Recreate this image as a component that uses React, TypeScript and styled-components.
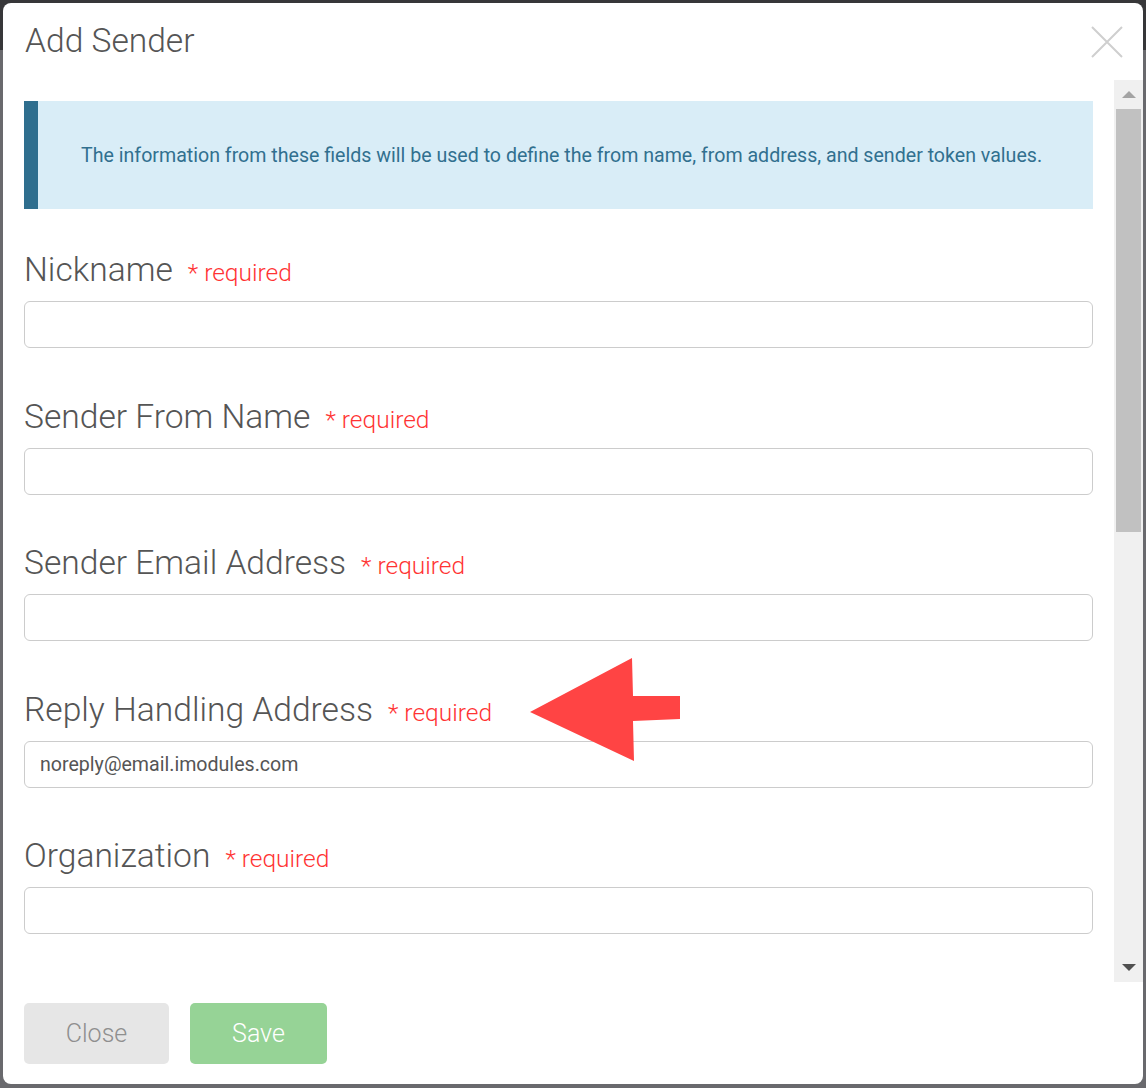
import React from 'react';
import styled, { createGlobalStyle } from 'styled-components';

const GlobalStyle = createGlobalStyle`
  html, body {
    margin: 0;
    padding: 0;
    background: #69696d;
  }
  body {
    font-family: Roboto, "Liberation Sans", sans-serif;
  }
`;

const fields = [
  { label: 'Nickname', value: '', arrow: false },
  { label: 'Sender From Name', value: '', arrow: false },
  { label: 'Sender Email Address', value: '', arrow: false },
  { label: 'Reply Handling Address', value: 'noreply@email.imodules.com', arrow: true },
  { label: 'Organization', value: '', arrow: false }
];

const App = () => {
  return (
    <>
      <GlobalStyle />
      <Backdrop>
        <Modal>
          <Header>
            <Title>Add Sender</Title>
            <CloseIcon aria-label="Close">
              <svg width="32" height="32" viewBox="0 0 32 32">
                <path d="M1 1 L31 31 M31 1 L1 31" stroke="#cfcfcf" strokeWidth="2" fill="none" />
              </svg>
            </CloseIcon>
          </Header>
          <Body>
            <Content>
              <Alert>
                The information from these fields will be used to define the from name, from address, and sender token values.
              </Alert>
              {fields.map((f) => (
                <Field key={f.label}>
                  <LabelRow>
                    <Label>{f.label}</Label>
                    <Required>* required</Required>
                    {f.arrow && (
                      <Pointer width="152" height="105" viewBox="0 0 152 105">
                        <polygon
                          points="0,54 102,0 103,38 150,38 150,61 103,63 104,103"
                          fill="#ff4444"
                        />
                      </Pointer>
                    )}
                  </LabelRow>
                  <Input type="text" defaultValue={f.value} />
                </Field>
              ))}
            </Content>
            <ScrollTrack>
              <ScrollButton>
                <svg width="14" height="8" viewBox="0 0 14 8">
                  <polygon points="0,7 14,7 7,0" fill="#a3a3a3" />
                </svg>
              </ScrollButton>
              <ScrollArea>
                <Thumb />
              </ScrollArea>
              <ScrollButton>
                <svg width="14" height="8" viewBox="0 0 14 8">
                  <polygon points="0,0 14,0 7,7" fill="#505050" />
                </svg>
              </ScrollButton>
            </ScrollTrack>
          </Body>
          <Footer>
            <Button $variant="close">Close</Button>
            <Button $variant="save">Save</Button>
          </Footer>
        </Modal>
      </Backdrop>
    </>
  );
};

const Backdrop = styled.div`
  width: 1146px;
  height: 1088px;
  box-sizing: border-box;
  padding: 3px;
  background: linear-gradient(#373739 0, #373739 50px, #69696d 50px);
  overflow: hidden;
`;

const Modal = styled.div`
  width: 1140px;
  height: 1081px;
  background: #fff;
  border-radius: 8px;
  display: flex;
  flex-direction: column;
  overflow: hidden;
`;

const Header = styled.div`
  height: 77px;
  flex-shrink: 0;
  display: flex;
  align-items: flex-start;
  justify-content: space-between;
  padding: 0 20px 0 22px;
`;

const Title = styled.h4`
  margin: 0;
  padding-top: 18px;
  font-size: 33.6px;
  line-height: 40px;
  font-weight: 300;
  color: #555;
`;

const CloseIcon = styled.div`
  margin-top: 23px;
  width: 32px;
  height: 32px;
  cursor: pointer;
`;

const Body = styled.div`
  height: 902px;
  flex-shrink: 0;
  display: flex;
`;

const Content = styled.div`
  flex: 1;
  overflow: hidden;
  padding: 21px 21px 0 21px;
`;

const ScrollTrack = styled.div`
  width: 29px;
  flex-shrink: 0;
  background: #f0f0f0;
  display: flex;
  flex-direction: column;
`;

const ScrollButton = styled.div`
  height: 29px;
  display: flex;
  align-items: center;
  justify-content: center;
`;

const ScrollArea = styled.div`
  flex: 1;
  padding: 0 2px;
`;

const Thumb = styled.div`
  height: 423px;
  background: #c1c1c1;
`;

const Alert = styled.div`
  height: 108px;
  box-sizing: border-box;
  background: #d9edf7;
  border-left: 14px solid #2f6e8e;
  color: #31708f;
  font-size: 19.6px;
  display: flex;
  align-items: center;
  padding-left: 43px;
  margin-bottom: 41px;
`;

const Field = styled.div`
  margin-bottom: 48.5px;
`;

const LabelRow = styled.div`
  position: relative;
  display: flex;
  align-items: baseline;
  height: 40px;
  margin-bottom: 11px;
`;

const Label = styled.label`
  font-size: 33.6px;
  line-height: 40px;
  font-weight: 300;
  color: #555;
`;

const Required = styled.span`
  margin-left: 15px;
  font-size: 24.5px;
  font-weight: 300;
  color: #ff3333;
`;

const Pointer = styled.svg`
  position: absolute;
  left: 506px;
  top: -32px;
`;

const Input = styled.input`
  display: block;
  width: 100%;
  height: 47px;
  box-sizing: border-box;
  border: 1px solid #cccccc;
  border-radius: 6px;
  padding: 0 15px;
  font-family: Roboto, "Liberation Sans", sans-serif;
  font-size: 19.6px;
  color: #555;
  outline: none;
`;

const Footer = styled.div`
  flex: 1;
  display: flex;
  gap: 21px;
  padding: 21px 21px 0 21px;
`;

const Button = styled.button<{ $variant: 'close' | 'save' }>`
  height: 61px;
  width: ${(p) => (p.$variant === 'close' ? '145px' : '137px')};
  border: none;
  border-radius: 5px;
  font-family: Roboto, "Liberation Sans", sans-serif;
  font-size: 25px;
  font-weight: 300;
  background: ${(p) => (p.$variant === 'close' ? '#e6e6e6' : '#96d396')};
  color: ${(p) => (p.$variant === 'close' ? '#8f8f8f' : '#ffffff')};
  cursor: pointer;
`;

export default App;
